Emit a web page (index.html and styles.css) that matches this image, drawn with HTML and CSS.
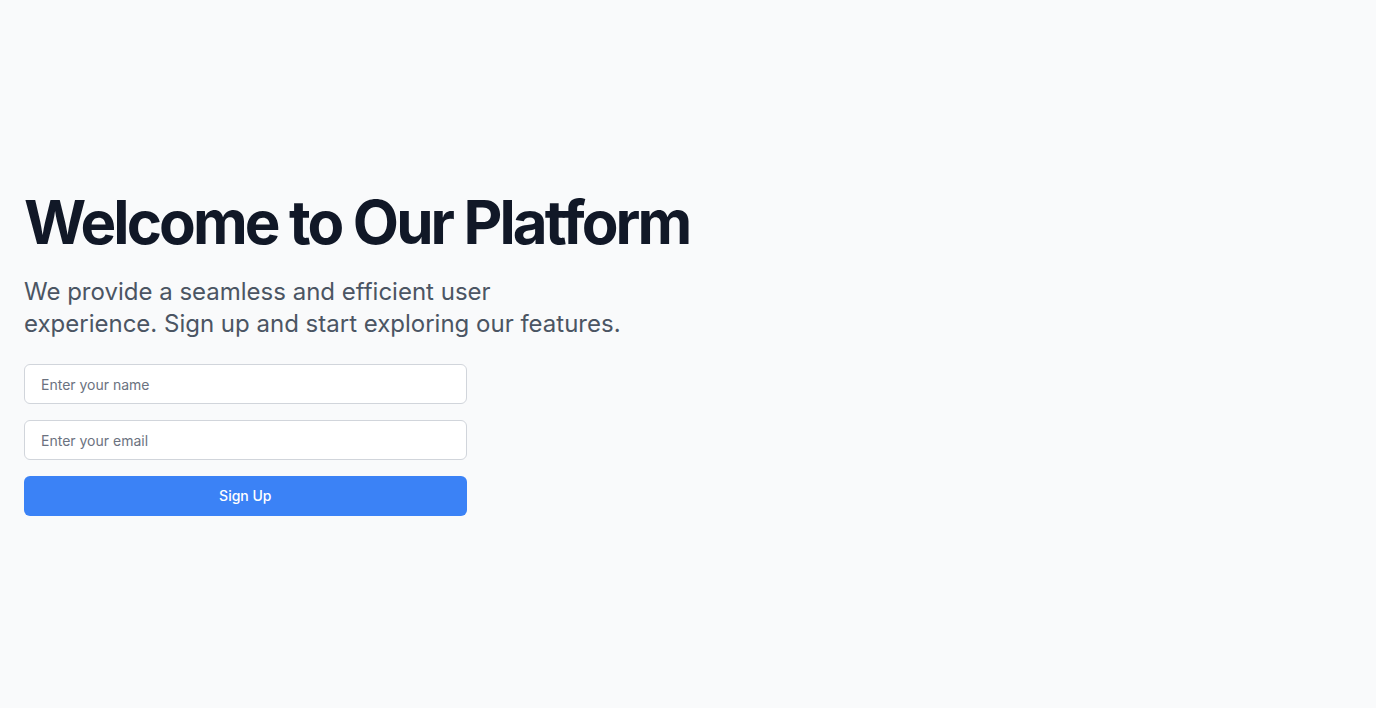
FILE: index.html
```html
<!DOCTYPE html>
<html lang="en">
<head>
<meta charset="utf-8">
<title>Welcome</title>
<link rel="stylesheet" href="styles.css">
</head>
<body>
<main class="page">
  <section class="hero">
    <h1 class="title">Welcome to Our Platform</h1>
    <p class="lead">We provide a seamless and efficient user experience. Sign up and start exploring our features.</p>
    <form class="form">
      <input class="field" type="text" placeholder="Enter your name">
      <input class="field" type="email" placeholder="Enter your email">
      <button class="btn" type="button">Sign Up</button>
    </form>
  </section>
</main>
</body>
</html>
```

FILE: styles.css
```css
* { box-sizing: border-box; }
html, body { margin: 0; padding: 0; }
body {
  background: #f9fafb;
  font-family: Inter, "Noto Sans", sans-serif;
  color: #111827;
}
.page {
  min-height: 708px;
  display: flex;
  align-items: center;
  padding: 0 24px;
}
.hero { width: 100%; }
.title {
  margin: 0 0 24px;
  font-size: 60px;
  line-height: 60px;
  font-weight: 700;
  letter-spacing: -0.048em;
  color: #111827;
}
.lead {
  margin: 0 0 24px;
  max-width: 600px;
  font-size: 24px;
  line-height: 32px;
  color: #4b5563;
}
.form {
  width: 33.3333%;
  display: flex;
  flex-direction: column;
  gap: 16px;
}
.field {
  height: 40px;
  padding: 0 16px;
  border: 1px solid #d1d5db;
  border-radius: 6px;
  background: #fff;
  font-family: inherit;
  font-size: 14px;
  color: #111827;
  outline: none;
}
.field::placeholder { color: #6b7280; }
.btn {
  height: 40px;
  padding: 0 0 1px;
  border: 0;
  border-radius: 6px;
  background: #3b82f6;
  color: #fff;
  font-family: inherit;
  font-size: 14px;
  font-weight: 500;
  cursor: pointer;
}
```
